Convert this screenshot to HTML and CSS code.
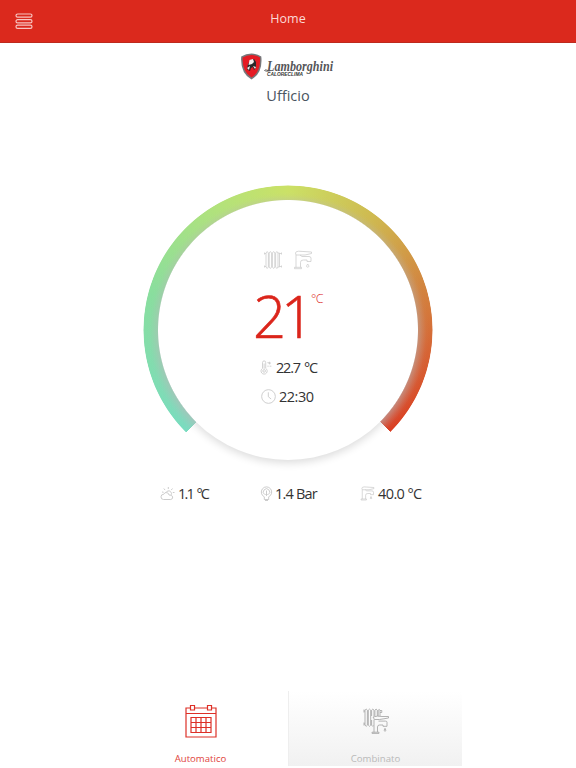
FILE: index.html
```
<!DOCTYPE html>
<html lang="it">
<head>
    <meta charset="UTF-8">
    <meta name="viewport" content="width=device-width, initial-scale=1.0">
    <title>Home</title>
    <link rel="stylesheet" href="styles.css">
</head>
<body>
    <svg class="symbols" width="0" height="0">
        <symbol id="radiator" viewBox="0 0 20 20">
            <path d="M3 3q1.2-3 2.4 0v14q-1.2 3-2.4 0zM6.2 3q1.2-3 2.4 0v14q-1.2 3-2.4 0zM9.4 3q1.2-3 2.4 0v14q-1.2 3-2.4 0zM12.6 3q1.2-3 2.4 0v14q-1.2 3-2.4 0zM15 3h1.500v14H15M1.500 3.500H3M1.500 16.500H3M16.500 3.500h2M16.500 16.500h2M1.500 2.500v2M1.500 15.500v2M18.500 2.500v2M18.500 15.500v2"/>
        </symbol>
        <symbol id="tap" viewBox="0 0 20 20">
            <path d="M2.500 3q0-1.600 3-1.800L18.500 2v1.500L12 5H3zM3 5v12.500M1.500 18.700v-1.400h7v1.400zM7.500 17.300v-5q0-2.500 3-2.300h3.500v1.500h4V8.300q0-1.800-2-1.800H9L7 5M14.700 14q-2.300 3 0 3.200 2.300-.2 0-3.200z"/>
        </symbol>
    </svg>

    <header>
        <svg class="menu" viewBox="0 0 18 17">
            <rect x="1" y="1" width="16" height="3.2" rx="1.6"/>
            <rect x="1" y="6.7" width="16" height="3.2" rx="1.6"/>
            <rect x="1" y="12.2" width="16" height="3.2" rx="1.6"/>
        </svg>
        <h1>Home</h1>
    </header>

    <main>
        <svg class="logo" viewBox="0 0 94 27">
            <path d="M11.5.5Q17 .8 21.3 3.4 23 20 11.5 26.5 0 20 1.2 3.4 6 .8 11.5.5z" fill="#77777a"/>
            <path d="M11.5 2Q16.5 2.3 20 4.4 21 19 11.5 24.6 2 19 2.6 4.4 6.5 2.3 11.5 2z" fill="#e51b24"/>
            <path d="M7 16l1-5 3-4 3-1 2 3v6l-2 2-1-3-2 1-1 3-2-1z" fill="#29282a"/>
            <path d="M9.5 7l3.5-1 1 3-2 2-3.5 1zM7 15l3-2-1 4zM13 13l3 1-1 2z" fill="#f5eeee"/>
            <text class="logo-name" x="27" y="18" textLength="66" lengthAdjust="spacingAndGlyphs">Lamborghini</text>
            <path d="M28 17.500q-3-1.500-3.500 0 1 1.500 6 .3" fill="none" stroke="#555" stroke-width=".8"/>
            <text class="logo-sub" x="27" y="22.8" textLength="36" lengthAdjust="spacingAndGlyphs">CALORECLIMA</text>
        </svg>
        <h2>Ufficio</h2>

        <section class="gauge">
            <div class="dial"></div>
            <div class="ring"></div>
            <div class="content">
                <div class="modes">
                    <svg><use href="#radiator"/></svg>
                    <svg><use href="#tap"/></svg>
                </div>
                <div class="target"><span class="number">21</span><span class="unit">°C</span></div>
                <div class="reading room">
                    <svg viewBox="0 0 15 17">
                        <path d="M3 9.5V3q0-2 1.8-2t1.8 2v6.5a3.5 3.5 0 1 1-3.6 0zM4.8 4v6"/>
                        <circle cx="4.8" cy="12.4" r="1.5"/>
                        <path d="M8.5 3h1.5M8.5 7h1.500M11 2v3M9.5 3.5h3M11 7h2"/>
                    </svg>
                    <span>22.7 °C</span>
                </div>
                <div class="reading time">
                    <svg viewBox="0 0 16 16">
                        <circle cx="8" cy="8" r="7.3"/>
                        <path d="M7.8 3.5v4.7l3 2.5"/>
                    </svg>
                    <span>22:30</span>
                </div>
            </div>
        </section>

        <section class="stats">
            <div class="reading outside">
                <svg viewBox="0 0 15 15">
                    <path d="M3.5 13.5a2.6 2.6 0 0 1 .2-5.2q1-2.5 3.3-1.6 1.6.2 2 2.3 3.2-.3 3.7 2 .1 2.3-2 2.5zM6.5 5.5q3-2 4.8 1 .5 1.2-.1 2.3M8.3 1v2M3.8 2.5l1.3 1.6M12.5 2.5l-1.3 1.6M12.8 6.5h1.7M2 6l1.6.3"/>
                </svg>
                <span>1.1 °C</span>
            </div>
            <div class="reading pressure">
                <svg viewBox="0 0 15 15">
                    <path d="M5.3 10.8a5.2 5.2 0 1 1 4.4 0v2.700H5.3zM5.5 8.500a3.200 3.200 0 1 1 4 0M7.5 4.5v5M6.5 8l1 1.5 1-1.5M6 14.5h3"/>
                </svg>
                <span>1.4 Bar</span>
            </div>
            <div class="reading water">
                <svg><use href="#tap"/></svg>
                <span>40.0 °C</span>
            </div>
        </section>
    </main>

    <footer>
        <div class="tab active">
            <svg viewBox="0 0 32 34">
                <path d="M5 4H1v29h30V4h-4M10 4h12M1 9.5h30"/>
                <path d="M5.500 1.500h4v4.500h-4zM22.500 1.500h4v4.500h-4z"/>
                <path d="M6 13.5h20v15H6zM11 13.5v15M16 13.5v15M21 13.5v15M6 18.5h20M6 23.5h20"/>
            </svg>
            <span>Automatico</span>
        </div>
        <div class="tab combined">
            <svg viewBox="0 0 26 26">
                <path d="M1 1.5v3M1 14.500v3M1 3h1M1 16h1M2 2.200q1.200-2.200 2.400 0v15q-1.200 2.200-2.400 0zM5.300 2.200q1.200-2.200 2.400 0v15q-1.200 2.200-2.400 0zM8.600 8V2.200q1.200-2.200 2.400 0V8M8.600 12v5.200q1 1.800 2 .5M11.900 8V2.200q1.200-2.200 2.400 0V8M15.200 8V2.200q1-1.500 1.800 0V8M17 2.500h1.800v2H17"/>
                <path d="M10 9q4-1.5 9-.5h6.5v1.5l-9 1.500h-5zM11 11.5v13M9 25.400v-1.200h7v1.200zM14.500 24v-5q0-2 2-2h3.500v1.300h4v-4q0-1.200-1.500-1.200h-7M22 20.300q-2 2.800 0 3 2-.2 0-3z"/>
            </svg>
            <span>Combinato</span>
        </div>
    </footer>
</body>
</html>
```
FILE: styles.css
```
* {
    box-sizing: border-box;
}
body {
    display: flex;
    flex-direction: column;
    height: 768px;
    margin: 0;
    background-color: #fff;
    color: #333;
    font-family: 'Open Sans', 'Noto Sans', sans-serif;
    overflow: hidden;
}
svg {
    display: block;
    flex: none;
    fill: none;
}
.symbols {
    position: absolute;
}
header {
    display: grid;
    grid-template-columns: 48px 1fr 48px;
    height: 43px;
    background-color: #db291d;
    border-bottom: 1px solid #bd2a1e;
}
.menu {
    width: 18px;
    height: 17px;
    margin: 13px 0 0 15px;
    stroke: #f8c5c1;
    stroke-width: 1.2;
}
h1 {
    margin: 10px 0 0;
    color: #fbdad7;
    font-size: 12.5px;
    font-weight: 400;
    line-height: 18px;
    text-align: center;
}
main {
    flex: 1;
}
.logo {
    width: 94px;
    height: 27px;
    margin: 10px 0 0 240px;
    overflow: visible;
}
.logo-name {
    fill: #555558;
    font: italic bold 14px 'Liberation Serif', serif;
}
.logo-sub {
    fill: #333;
    font: italic bold 4.5px 'Liberation Sans', sans-serif;
}
h2 {
    margin: 6px 0 0;
    color: #4a5460;
    font-size: 14.5px;
    font-weight: 400;
    line-height: 20px;
    text-align: center;
}
.gauge {
    display: grid;
    width: 290px;
    height: 290px;
    margin: 79px auto 0;
}
.dial, .ring, .content {
    grid-area: 1 / 1;
}
.dial {
    margin: 15px;
    border-radius: 50%;
    box-shadow: 0 3px 9px rgba(0, 0, 0, 0.14);
}
.ring {
    border-radius: 50%;
    background:
        radial-gradient(circle at 50% 51%, rgba(185, 185, 185, 0.55) 129px, rgba(185, 185, 185, 0.25) 134px, rgba(185, 185, 185, 0.05) 138px, transparent 141px),
        conic-gradient(from 225deg, #79dcc0, #89de9e 60deg, #b2e27b 105deg, #cbe166 135deg, #cfb950 172deg, #d28740 205deg, #d66635 232deg, #da3d22 270deg, transparent 270deg);
    -webkit-mask: conic-gradient(from 225deg, #000 270deg, transparent 270deg), radial-gradient(circle, transparent 129.5px, #000 130.5px, #000 144px, transparent 145px);
    -webkit-mask-composite: source-in;
    mask-composite: intersect;
}
.content {
    display: flex;
    flex-direction: column;
    align-items: center;
    padding-top: 65px;
}
.modes {
    display: flex;
    gap: 10px;
    height: 22px;
}
.modes svg {
    width: 20px;
    height: 20px;
    stroke: #cdcdcd;
    stroke-width: 0.8;
}
.target {
    display: flex;
    width: 70px;
    height: 76px;
    margin-top: 6px;
    color: #db251b;
    font-weight: 300;
}
.number {
    width: 58px;
    font-size: 58px;
    line-height: 76px;
    letter-spacing: -5px;
    -webkit-text-stroke: 0.6px #db251b;
}
.unit {
    margin-top: 12px;
    font-size: 12.5px;
    line-height: 18px;
    letter-spacing: -0.5px;
}
.reading {
    display: flex;
    align-items: center;
    height: 20px;
    font-size: 14.5px;
    letter-spacing: -0.8px;
    white-space: nowrap;
}
.reading svg {
    width: 15px;
    height: 15px;
    margin-right: 3px;
    stroke: #c6c6c6;
    stroke-width: 0.9;
}
.room {
    width: 58px;
    margin-top: 3px;
    letter-spacing: -1.2px;
    word-spacing: 1.5px;
}
.room svg {
    margin-right: 2px;
}
.time {
    width: 54px;
    margin-top: 9px;
    letter-spacing: -0.5px;
}
.stats {
    display: grid;
    grid-template-columns: 99px 101px 70px;
    margin: 8px 0 0 160px;
}
.outside {
    letter-spacing: -1.8px;
    word-spacing: 1.5px;
}
.pressure svg {
    margin-right: 1px;
}
.water {
    letter-spacing: -0.6px;
}
.water svg {
    margin-right: 3px;
}
footer {
    display: grid;
    grid-template-columns: 175px 174px;
    height: 75px;
    margin: 0 0 2px 113px;
}
.tab {
    display: flex;
    flex-direction: column;
    align-items: center;
    font-size: 9.6px;
    line-height: 14px;
}
.tab span {
    margin-top: auto;
}
.active {
    color: #e0443b;
}
.active svg {
    width: 32px;
    height: 34px;
    margin-top: 13px;
    stroke: #dd3027;
    stroke-width: 1.2;
}
.combined {
    border-left: 1px solid #eee;
    background: linear-gradient(#fff, #f1f1f1);
    color: #b9b9b9;
}
.combined svg {
    width: 26px;
    height: 26px;
    margin-top: 17px;
    stroke: #aaa;
    stroke-width: 0.9;
}
```
